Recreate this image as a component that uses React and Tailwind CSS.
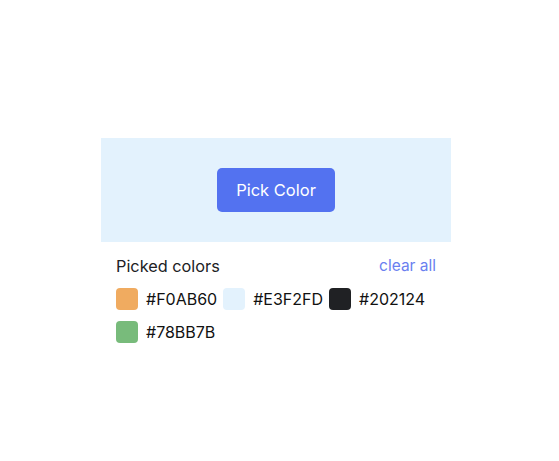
export default function App() {
  const colors = ["#F0AB60", "#E3F2FD", "#202124", "#78BB7B"];
  return (
    <div className="w-[559px] h-[461px] bg-white" style={{ fontFamily: "Inter, 'Noto Sans', sans-serif" }}>
      <div className="pt-[138px] pl-[101px]">
        <div className="w-[350px]">
          <div className="h-[104px] bg-[#E3F2FD] flex items-center justify-center">
            <button className="w-[118px] h-[44px] rounded-[5px] bg-[#5372F0] text-white text-[16.5px]">Pick Color</button>
          </div>
          <div className="px-[15px] pt-[14px]">
            <div className="flex justify-between items-center h-[20px]">
              <span className="text-[16.3px] leading-[20px] text-[#202124]">Picked colors</span>
              <span className="text-[15.5px] leading-[20px] text-[#6a80f0]">clear all</span>
            </div>
            <div className="flex flex-wrap gap-x-[6px] gap-y-[11px] mt-[12px]">
              {colors.map((c) => (
                <div key={c} className="flex items-center gap-[8px] h-[22px]">
                  <div className="w-[22px] h-[22px] rounded-[4px]" style={{ background: c }} />
                  <span className="text-[16px] leading-[22px] text-[#111]">{c}</span>
                </div>
              ))}
            </div>
          </div>
        </div>
      </div>
    </div>
  );
}
